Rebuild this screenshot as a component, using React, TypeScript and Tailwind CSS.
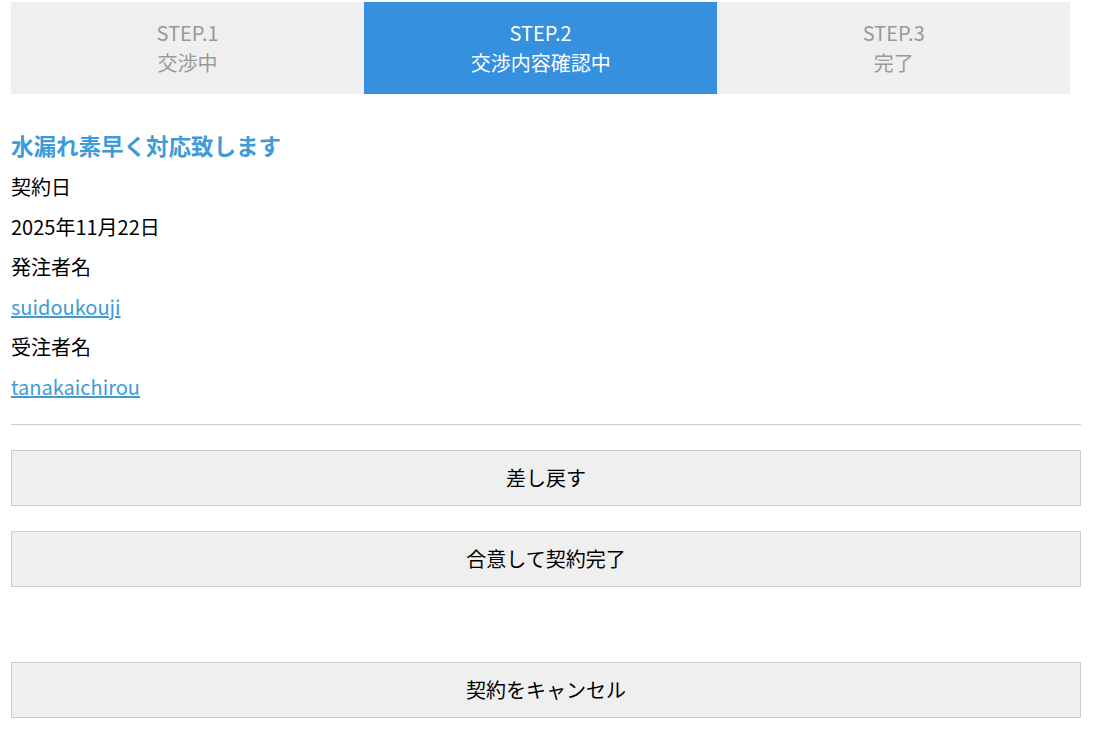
import React from "react";

const font = { fontFamily: '"Noto Sans CJK JP", "Noto Sans", sans-serif' };

function Step({ n, label, active }: { n: number; label: string; active?: boolean }) {
  return (
    <div
      className={`w-[33%] h-[92px] flex flex-col items-center justify-center text-[20px] leading-[30px] ${
        active ? "bg-[#3590e0] text-white" : "bg-[#efefef] text-[#999999]"
      }`}
    >
      <div>STEP.{n}</div>
      <div>{label}</div>
    </div>
  );
}

function Btn({ children, className = "" }: { children: React.ReactNode; className?: string }) {
  return (
    <button
      className={`w-full h-[56px] border border-[#cccccc] bg-[#efefef] text-[20px] text-black flex items-center justify-center ${className}`}
    >
      {children}
    </button>
  );
}

export default function App() {
  return (
    <div className="w-[1097px] min-h-[736px] bg-white px-[11px] pt-[2px]" style={font}>
      <div className="w-[1070px]">
        <div className="flex">
          <Step n={1} label="交渉中" />
          <Step n={2} label="交渉内容確認中" active />
          <Step n={3} label="完了" />
        </div>
        <div className="mt-[31px] text-[22.5px] leading-[40px] font-bold text-[#3d9bd8]">
          水漏れ素早く対応致します
        </div>
        <div className="mt-[2px] text-[20px] leading-[40px] text-black">
          <div>契約日</div>
          <div>2025年11月22日</div>
          <div>発注者名</div>
          <div>
            <a className="text-[#3d9bd8] underline">suidoukouji</a>
          </div>
          <div>受注者名</div>
          <div>
            <a className="text-[#3d9bd8] underline">tanakaichirou</a>
          </div>
        </div>
        <div className="mt-[17px] h-px bg-[#cccccc]" />
        <Btn className="mt-[25px]">差し戻す</Btn>
        <Btn className="mt-[25px]">合意して契約完了</Btn>
        <Btn className="mt-[75px]">契約をキャンセル</Btn>
      </div>
    </div>
  );
}
